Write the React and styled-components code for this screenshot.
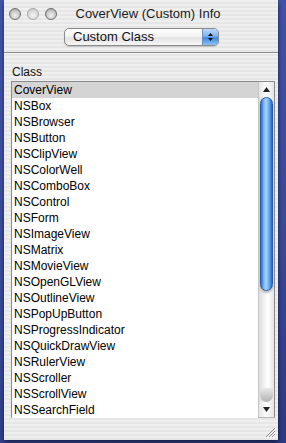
import React from "react";
import styled, { createGlobalStyle } from "styled-components";

const GlobalStyle = createGlobalStyle`
  html, body {
    margin: 0;
    padding: 0;
    width: 286px;
    height: 443px;
    overflow: hidden;
    background: linear-gradient(160deg, #4556b0 0%, #3a4a9c 60%, #2d3a82 100%);
    font-family: "Liberation Sans", Arial, sans-serif;
  }
`;

const Desktop = styled.div`
  width: 286px;
  height: 443px;
  padding-left: 4px;
  box-sizing: border-box;
`;

const Window = styled.div`
  width: 274px;
  height: 440px;
  display: flex;
  flex-direction: column;
  background: repeating-linear-gradient(
    to bottom,
    #efefef 0px,
    #efefef 2px,
    #e6e6e6 2px,
    #e6e6e6 4px
  );
  box-shadow: 0 2px 5px rgba(0, 0, 0, 0.55);
  position: relative;
`;

const TitleBar = styled.div`
  height: 24px;
  display: flex;
  align-items: center;
  position: relative;
  padding-left: 5px;
  padding-top: 3px;
  box-sizing: border-box;
`;

const Lights = styled.div`
  display: flex;
  gap: 6px;
`;

const Light = styled.span`
  width: 12px;
  height: 12px;
  border-radius: 50%;
  box-sizing: border-box;
  border: 1px solid ${(p) => (p.$dim ? "#a8a8a8" : "#6e6e6e")};
  background: ${(p) =>
    p.$dim
      ? "radial-gradient(circle at 50% 65%, #f4f4f4 0%, #d6d6d6 60%, #bdbdbd 100%)"
      : "radial-gradient(circle at 50% 65%, #f0f0f0 0%, #c8c8c8 55%, #8a8a8a 100%)"};
`;

const Title = styled.div`
  position: absolute;
  left: 0;
  right: 0;
  top: 6px;
  text-align: center;
  font-size: 13px;
  color: #1a1a1a;
  padding-left: 14px;
`;

const PopupRow = styled.div`
  display: flex;
  padding-left: 60px;
  padding-top: 4px;
  height: 28px;
  box-sizing: border-box;
`;

const Popup = styled.div`
  width: 155px;
  height: 18px;
  box-sizing: border-box;
  border: 1px solid #8a8a8a;
  border-radius: 5px;
  display: flex;
  background: linear-gradient(to bottom, #ffffff 0%, #f4f4f4 45%, #e2e2e2 55%, #f6f6f6 100%);
  overflow: hidden;
  box-shadow: 0 1px 1px rgba(0, 0, 0, 0.15);
`;

const PopupLabel = styled.span`
  flex: 1;
  font-size: 13px;
  line-height: 16px;
  padding-left: 8px;
  color: #111;
`;

const PopupArrows = styled.span`
  width: 15px;
  border-left: 1px solid #6b8fc8;
  background: linear-gradient(to bottom, #b9d8fb 0%, #7fb2ef 45%, #3f86e2 55%, #8cc2f6 100%);
  display: flex;
  flex-direction: column;
  align-items: center;
  justify-content: center;
  gap: 2px;
`;

const Separator = styled.div`
  height: 1px;
  background: #8c8c8c;
  border-bottom: 1px solid #f8f8f8;
`;

const SectionLabel = styled.div`
  font-size: 12px;
  color: #111;
  padding: 11px 0 0 8px;
  height: 27px;
  box-sizing: border-box;
`;

const ListBox = styled.div`
  margin-left: 7px;
  width: 264px;
  height: 337px;
  box-sizing: border-box;
  border: 1px solid #8a8a8a;
  border-bottom-color: #b8b8b8;
  background: #fff;
  display: flex;
`;

const Rows = styled.div`
  flex: 1;
  display: flex;
  flex-direction: column;
`;

const Row = styled.div`
  height: 16px;
  line-height: 16px;
  font-size: 12px;
  padding-left: 2px;
  color: #000;
  background: ${(p) => (p.$selected ? "#d4d4d4" : "#fff")};
  white-space: nowrap;
`;

const Scrollbar = styled.div`
  width: 15px;
  display: flex;
  flex-direction: column;
  background: linear-gradient(to right, #dcdcdc 0%, #f6f6f6 40%, #ffffff 60%, #e4e4e4 100%);
  border-left: 1px solid #c6c6c6;
`;

const ArrowBox = styled.div`
  height: 15px;
  display: flex;
  align-items: center;
  justify-content: center;
  background: linear-gradient(to right, #e6e6e6 0%, #fdfdfd 50%, #e4e4e4 100%);
`;

const Thumb = styled.div`
  height: 194px;
  margin: 0 1px;
  border-radius: 7px;
  border: 1px solid #2a5aa8;
  box-sizing: border-box;
  background: linear-gradient(
    to right,
    #2c6bd0 0%,
    #76b4f4 25%,
    #a9d4fb 45%,
    #6fb0f2 70%,
    #2a66c8 100%
  );
  box-shadow: 0 2px 2px rgba(0, 0, 0, 0.25);
`;

const Track = styled.div`
  flex: 1;
`;

const EndCap = styled.div`
  height: 14px;
  margin: 0 1px;
  border-radius: 0 0 7px 7px;
  background: linear-gradient(to bottom, #e8e8e8 0%, #c8c8c8 60%, #b4b4b4 100%);
`;

const Grip = styled.svg`
  position: absolute;
  right: 2px;
  bottom: 2px;
`;

const classes = [
  "CoverView",
  "NSBox",
  "NSBrowser",
  "NSButton",
  "NSClipView",
  "NSColorWell",
  "NSComboBox",
  "NSControl",
  "NSForm",
  "NSImageView",
  "NSMatrix",
  "NSMovieView",
  "NSOpenGLView",
  "NSOutlineView",
  "NSPopUpButton",
  "NSProgressIndicator",
  "NSQuickDrawView",
  "NSRulerView",
  "NSScroller",
  "NSScrollView",
  "NSSearchField",
];

const Tri = ({ up }) => (
  <svg width="7" height="5" viewBox="0 0 7 5">
    <path d={up ? "M3.5 0 L7 5 L0 5 Z" : "M0 0 L7 0 L3.5 5 Z"} fill="#222" />
  </svg>
);

const App = () => {
  return (
    <Desktop>
      <GlobalStyle />
      <Window>
        <TitleBar>
          <Lights>
            <Light />
            <Light $dim />
            <Light />
          </Lights>
          <Title>CoverView (Custom) Info</Title>
        </TitleBar>
        <PopupRow>
          <Popup>
            <PopupLabel>Custom Class</PopupLabel>
            <PopupArrows>
              <svg width="5" height="3" viewBox="0 0 5 3">
                <path d="M2.5 0 L5 3 L0 3 Z" fill="#111" />
              </svg>
              <svg width="5" height="3" viewBox="0 0 5 3">
                <path d="M0 0 L5 0 L2.5 3 Z" fill="#111" />
              </svg>
            </PopupArrows>
          </Popup>
        </PopupRow>
        <Separator />
        <SectionLabel>Class</SectionLabel>
        <ListBox>
          <Rows>
            {classes.map((c, i) => (
              <Row key={c} $selected={i === 0}>
                {c}
              </Row>
            ))}
          </Rows>
          <Scrollbar>
            <ArrowBox>
              <Tri up />
            </ArrowBox>
            <Thumb />
            <Track />
            <EndCap />
            <ArrowBox>
              <Tri />
            </ArrowBox>
          </Scrollbar>
        </ListBox>
        <Grip width="11" height="11" viewBox="0 0 11 11">
          <path d="M10 1 L1 10 M10 4 L4 10 M10 7 L7 10" stroke="#8a8a8a" strokeWidth="1" />
          <path d="M11 2 L2 11 M11 5 L5 11 M11 8 L8 11" stroke="#fff" strokeWidth="1" />
        </Grip>
      </Window>
    </Desktop>
  );
};

export default App;
